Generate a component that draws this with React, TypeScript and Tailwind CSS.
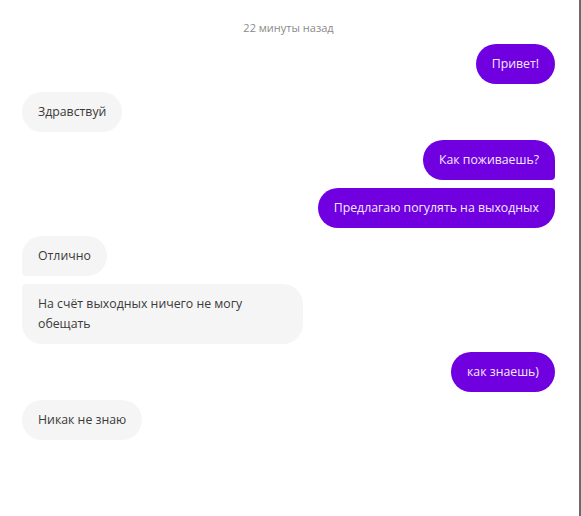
type Msg = {
  id: number;
  text: string;
  mine: boolean;
  shape: string;
};

// shape carries the corner treatment for grouped bubbles
const messages: Msg[] = [
  { id: 1, text: "Привет!", mine: true, shape: "rounded-[20px]" },
  { id: 2, text: "Здравствуй", mine: false, shape: "rounded-[20px]" },
  { id: 3, text: "Как поживаешь?", mine: true, shape: "rounded-[20px] rounded-br-[4px]" },
  { id: 4, text: "Предлагаю погулять на выходных", mine: true, shape: "rounded-[20px] rounded-tr-[4px]" },
  { id: 5, text: "Отлично", mine: false, shape: "rounded-[20px] rounded-bl-[4px]" },
  { id: 6, text: "На счёт выходных ничего не могу обещать", mine: false, shape: "rounded-[20px] rounded-tl-[4px]" },
  { id: 7, text: "как знаешь)", mine: true, shape: "rounded-[20px]" },
  { id: 8, text: "Никак не знаю", mine: false, shape: "rounded-[20px]" },
];

function Bubble({ msg }: { msg: Msg }) {
  return (
    <div className={msg.mine ? "flex justify-end" : "flex justify-start"}>
      <div
        className={`${msg.shape} max-w-[281px] px-4 py-[10px] text-[12.3px] leading-5 ${
          msg.mine ? "bg-[#7000e0] text-[#f3eaff]" : "bg-[#f5f5f5] text-[#3a3a3a]"
        }`}
      >
        {msg.text}
      </div>
    </div>
  );
}

export default function App() {
  return (
    <div className="flex h-[516px] w-[581px] bg-white font-['Open_Sans',sans-serif]">
      <div className="flex-1 pl-[22px] pr-[24px]">
        <div className="pt-[20px] pb-[8px] text-center text-[11px] leading-[16px] text-[#8a8a8a]">
          22 минуты назад
        </div>
        <div className="flex flex-col gap-2">
          {messages.map((m) => (
            <Bubble key={m.id} msg={m} />
          ))}
        </div>
      </div>
      <div className="w-[2px] bg-[#6b6b6b]" />
    </div>
  );
}
